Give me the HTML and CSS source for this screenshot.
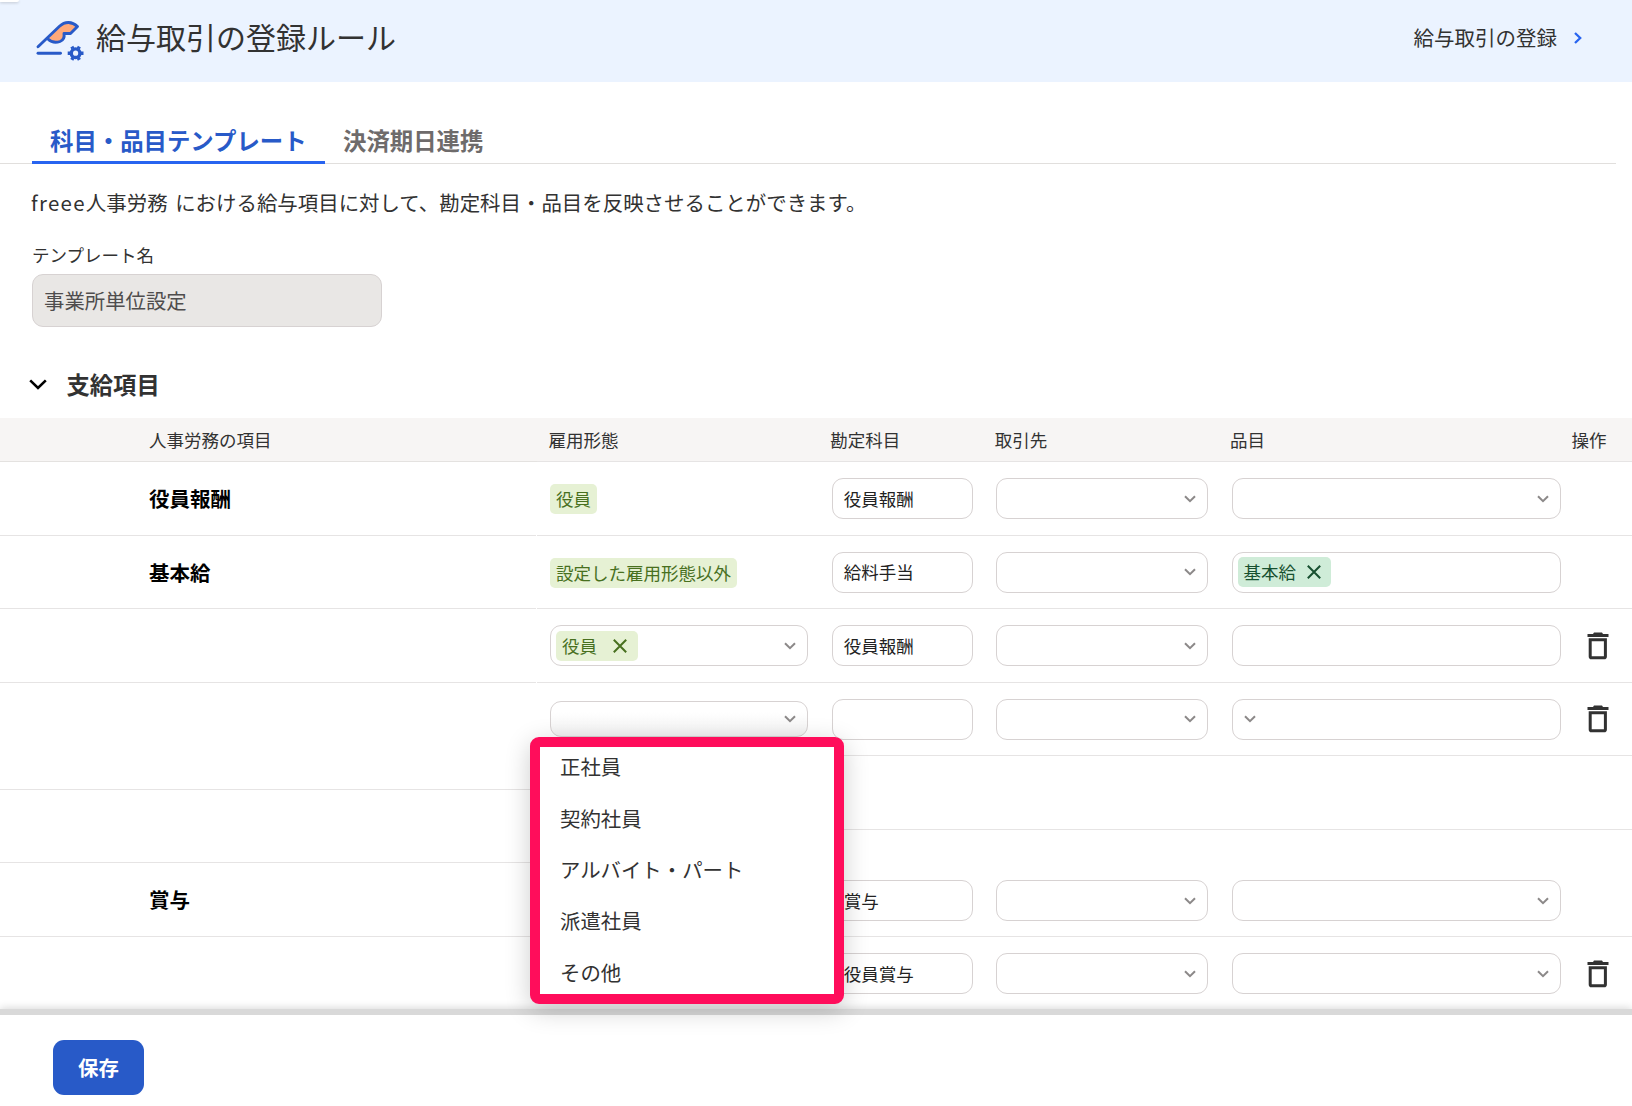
FILE: index.html
```html
<!DOCTYPE html>
<html lang="ja">
<head>
    <meta charset="UTF-8">
    <meta name="viewport" content="width=device-width, initial-scale=1.0">
    <title>給与取引の登録ルール</title>
    <link rel="stylesheet" href="styles.css">
</head>
<body>

<!-- Shared icons -->
<svg class="sprite" xmlns="http://www.w3.org/2000/svg">
    <symbol id="chevron" viewBox="0 0 12 8">
        <path d="M1 1.2 L6 6.2 L11 1.2" fill="none" stroke="currentColor" stroke-width="2"/>
    </symbol>
    <symbol id="close" viewBox="0 0 14 14">
        <path d="M0.8 0.8 L13.2 13.2 M13.2 0.8 L0.8 13.2" fill="none" stroke="currentColor" stroke-width="2"/>
    </symbol>
    <symbol id="trash" viewBox="0 0 22 28">
        <path d="M0.5 2 H6 L7 0.6 H15 L16 2 H21.5 V4.9 H0.5 Z" fill="currentColor"/>
        <path d="M3.2 7.8 H18.4 V24.4 Q18.4 25.7 17.1 25.7 H4.5 Q3.2 25.7 3.2 24.4 Z" fill="none" stroke="currentColor" stroke-width="3"/>
    </symbol>
</svg>

<div class="page">
    <header class="page-header">
        <span class="corner-tab"></span>
        <svg class="header-icon" width="50" height="42" viewBox="0 0 50 42">
            <path d="M13 19 L23 7.5 C28 2 36 1.5 42.5 6.5 L35.5 13.5 L29 13.5 Q29 22 21.5 22.5 Q16.5 22.6 13 19 Z" fill="#ffa97a"/>
            <path d="M3 26.7 L24.5 6.3 C30 1 37 1.3 42.5 6.5 L35.5 13.5 L29 13.5 Q30 19.5 25 21.5 Q18 24 13 19" fill="none" stroke="#285ac8" stroke-width="2.9" stroke-linecap="round" stroke-linejoin="round"/>
            <path d="M3 33.2 H25.5" stroke="#285ac8" stroke-width="2.9" stroke-linecap="round"/>
            <circle cx="40.6" cy="33.2" r="4.3" fill="none" stroke="#285ac8" stroke-width="3.4"/>
            <path d="M45.8 33.2 H48.5 M43.3 37.9 L44.4 39.8 M37.9 37.9 L36.8 39.8 M35.4 33.2 H32.7 M37.9 28.5 L36.8 26.6 M43.3 28.5 L44.4 26.6" stroke="#285ac8" stroke-width="3.4"/>
        </svg>
        <h1>給与取引の登録ルール</h1>
        <a class="header-link" href="#">給与取引の登録
            <svg width="8" height="12" viewBox="0 0 8 12"><path d="M1 1 L6.2 6 L1 11" fill="none" stroke="#2864f0" stroke-width="2.3"/></svg>
        </a>
    </header>

    <nav class="tabs">
        <a class="tab active" href="#">科目・品目テンプレート</a>
        <a class="tab" href="#">決済期日連携</a>
    </nav>

    <p class="lead"><span class="latin">freee</span>人事労務 における給与項目に対して、勘定科目・品目を反映させることができます。</p>

    <div class="field">
        <label for="template-name">テンプレート名</label>
        <input type="text" id="template-name" value="事業所単位設定" disabled>
    </div>

    <h2 class="section-title">
        <svg width="18" height="12" viewBox="0 0 18 12"><path d="M1.2 2.4 L9 10 L16.8 2.4" fill="none" stroke="#000" stroke-width="2.6"/></svg>
        支給項目
    </h2>

    <div class="table">
        <div class="names">
            <div class="head">人事労務の項目</div>
            <div class="name">役員報酬</div>
            <div class="name">基本給</div>
            <div class="name"></div>
            <div class="name tall"></div>
            <div class="name"></div>
            <div class="name">賞与</div>
            <div class="name last"></div>
        </div>

        <div class="rules">
            <div class="head rule">
                <div>雇用形態</div>
                <div>勘定科目</div>
                <div>取引先</div>
                <div>品目</div>
                <div>操作</div>
            </div>
            <div class="rule">
                <div><span class="tag">役員</span></div>
                <div class="box">役員報酬</div>
                <div class="box select"><svg class="arrow"><use href="#chevron"/></svg></div>
                <div class="box select"><svg class="arrow"><use href="#chevron"/></svg></div>
            </div>
            <div class="rule">
                <div><span class="tag">設定した雇用形態以外</span></div>
                <div class="box">給料手当</div>
                <div class="box select"><svg class="arrow"><use href="#chevron"/></svg></div>
                <div class="box tagged"><span class="tag item">基本給<svg class="close"><use href="#close"/></svg></span></div>
            </div>
            <div class="rule">
                <div class="box select tagged type"><span class="tag removable">役員<svg class="close"><use href="#close"/></svg></span><svg class="arrow"><use href="#chevron"/></svg></div>
                <div class="box">役員報酬</div>
                <div class="box select"><svg class="arrow"><use href="#chevron"/></svg></div>
                <div class="box"></div>
                <svg class="trash"><use href="#trash"/></svg>
            </div>
            <div class="rule">
                <div class="box select type open">
                    <svg class="arrow"><use href="#chevron"/></svg>
                    <ul class="menu">
                        <li>正社員</li>
                        <li>契約社員</li>
                        <li>アルバイト・パート</li>
                        <li>派遣社員</li>
                        <li>その他</li>
                    </ul>
                </div>
                <div class="box"></div>
                <div class="box select"><svg class="arrow"><use href="#chevron"/></svg></div>
                <div class="box"><svg class="arrow"><use href="#chevron"/></svg></div>
                <svg class="trash"><use href="#trash"/></svg>
            </div>
            <div class="rule"></div>
            <div class="rule tall">
                <div></div>
                <div class="box">賞与</div>
                <div class="box select"><svg class="arrow"><use href="#chevron"/></svg></div>
                <div class="box select"><svg class="arrow"><use href="#chevron"/></svg></div>
            </div>
            <div class="rule last">
                <div></div>
                <div class="box">役員賞与</div>
                <div class="box select"><svg class="arrow"><use href="#chevron"/></svg></div>
                <div class="box select"><svg class="arrow"><use href="#chevron"/></svg></div>
                <svg class="trash"><use href="#trash"/></svg>
            </div>
        </div>
    </div>

    <footer class="actions">
        <button class="save">保存</button>
    </footer>
</div>

</body>
</html>
```

FILE: styles.css
```css
* {
    box-sizing: border-box;
}
body {
    margin: 0;
    font-family: "Noto Sans CJK JP", sans-serif;
    font-size: 20.4px;
    line-height: 30px;
    color: #323232;
    background-color: #fff;
}
.sprite {
    display: none;
}
.page {
    display: flex;
    flex-direction: column;
    width: 1632px;
    height: 1106px;
    overflow: hidden;
}
.page > * {
    flex-shrink: 0;
}
svg {
    flex-shrink: 0;
}

/* Header */
.page-header {
    display: flex;
    align-items: center;
    height: 82px;
    padding: 0 50px 8px 35px;
    background-color: #ebf3ff;
    position: relative;
}
.corner-tab {
    position: absolute;
    top: 0;
    left: 0;
    width: 19px;
    height: 2px;
    background-color: #fff;
    border-radius: 0 0 4px 0;
    box-shadow: 0 1px 3px rgba(0, 0, 0, 0.2);
}
.header-icon {
    margin-top: 7px;
}
.page-header h1 {
    margin: -2px 0 0 11px;
    font-size: 30px;
    font-weight: 400;
    line-height: 40px;
}
.header-link {
    display: flex;
    align-items: center;
    gap: 17px;
    margin-left: auto;
    font-size: 20.5px;
    color: #323232;
    text-decoration: none;
}
.header-link svg {
    margin-top: 2px;
}

/* Tabs */
.tabs {
    display: flex;
    width: 1616px;
    height: 49px;
    margin-top: 33px;
    padding-left: 32px;
    border-bottom: 1px solid #e1dfdd;
}
.tab {
    height: 49px;
    padding: 7px 18px 0;
    font-size: 23.4px;
    line-height: 36px;
    font-weight: 700;
    color: #6e6b6b;
    text-decoration: none;
}
.tab.active {
    width: 293px;
    color: #285ac8;
    border-bottom: 3px solid #2864f0;
}

.lead {
    height: 31px;
    margin: 23px 0 0 31px;
    font-size: 20.45px;
    word-spacing: 3px;
}
.latin {
    letter-spacing: 1.3px;
}

/* Template name */
.field {
    display: flex;
    flex-direction: column;
    margin: 23px 0 0 32px;
}
.field label {
    height: 33px;
    font-size: 17.5px;
    line-height: 28px;
}
.field input {
    width: 350px;
    height: 53px;
    padding: 0 11px 2px;
    font: inherit;
    color: #4f4d4d;
    background-color: #e9e7e5;
    border: 1px solid #d7d2d2;
    border-radius: 11px;
}

.section-title {
    display: flex;
    align-items: center;
    gap: 20px;
    height: 34px;
    margin: 40px 0 0 28.5px;
    font-size: 23.3px;
}

/* Table: the names column has its own row heights */
.table {
    display: flex;
    height: 591px;
    margin-top: 17px;
}
.names {
    width: 537px;
}
.rules {
    width: 1095px;
}
.head {
    height: 44px;
    font-size: 17.5px;
    background-color: #f7f5f4;
    border-bottom: 1px solid #e4e2e0;
    display: flex;
    align-items: center;
}
.names .head {
    padding-left: 149px;
}
.name {
    display: flex;
    align-items: center;
    height: 73.5px;
    padding: 0 0 0 149px;
    font-size: 20.5px;
    font-weight: 700;
    color: #000;
    border-bottom: 1px solid #e6e4e4;
    margin-right: 1px;
}
.name.tall {
    height: 107.2px;
}
.rule {
    display: grid;
    grid-template-columns: 258.4px 141px 212px 329px 22px;
    column-gap: 23.4px;
    align-items: center;
    height: 73.5px;
    padding-left: 13px;
    font-size: 17.5px;
    color: #222;
    border-bottom: 1px solid #e6e4e4;
}
.rule.tall {
    height: 107px;
    align-items: end;
    padding-bottom: 14.5px;
}
.rule.head {
    height: 44px;
    padding-left: 11.5px;
    color: #323232;
}
.rule.head div:last-child {
    width: 40px;
    margin-left: -11px;
}
.rule.last,
.name.last {
    border-bottom: none;
}
.box {
    display: flex;
    align-items: center;
    height: 41px;
    margin-top: 1px;
    padding: 0 11px;
    background-color: #fff;
    border: 1px solid #d7d2d2;
    border-radius: 11px;
}
.box.tagged {
    padding-left: 5px;
}
.arrow {
    width: 12px;
    height: 8px;
    color: #8c8989;
}
.select .arrow {
    margin-left: auto;
}
.tag {
    display: inline-flex;
    align-items: center;
    height: 30px;
    padding: 0 6px;
    line-height: 28px;
    vertical-align: middle;
    color: #48701f;
    background-color: #e6f1d4;
    border-radius: 5px;
}
.tag.item {
    color: #175030;
    background-color: #cfecd8;
}
.close {
    width: 14px;
    height: 14px;
    margin: 0 4px 0 11px;
}
.removable .close {
    margin-left: 16px;
    margin-right: 5px;
}
.trash {
    width: 22px;
    height: 28px;
    margin: 1px 0 0 3px;
    color: #323232;
}

/* Employment type menu */
.box.open {
    position: relative;
    height: 36px;
    background-image: linear-gradient(#fff 30%, #f3f3f3);
}
.menu {
    position: absolute;
    top: 35px;
    left: -21px;
    z-index: 2;
    width: 314px;
    height: 267px;
    margin: 0;
    padding: 0 0 0 20px;
    list-style: none;
    font-size: 20.4px;
    color: #323232;
    background-color: #fff;
    border: 10px solid #ff0d5b;
    border-radius: 9px;
    box-shadow: 0 6px 26px rgba(0, 0, 0, 0.2);
}
.menu li {
    height: 51.4px;
    line-height: 39px;
}

/* Footer */
.actions {
    position: relative;
    z-index: 1;
    flex: 1;
    padding: 25px 53px 0;
    background-color: #fff;
    border-top: 6px solid #d9d9d9;
    box-shadow: 0 -1px 8px rgba(0, 0, 0, 0.16);
}
.save {
    width: 91px;
    height: 55px;
    padding: 0 0 2px;
    font: inherit;
    font-weight: 700;
    color: #fff;
    background-color: #285ac8;
    border: none;
    border-radius: 11px;
    cursor: pointer;
}
```
